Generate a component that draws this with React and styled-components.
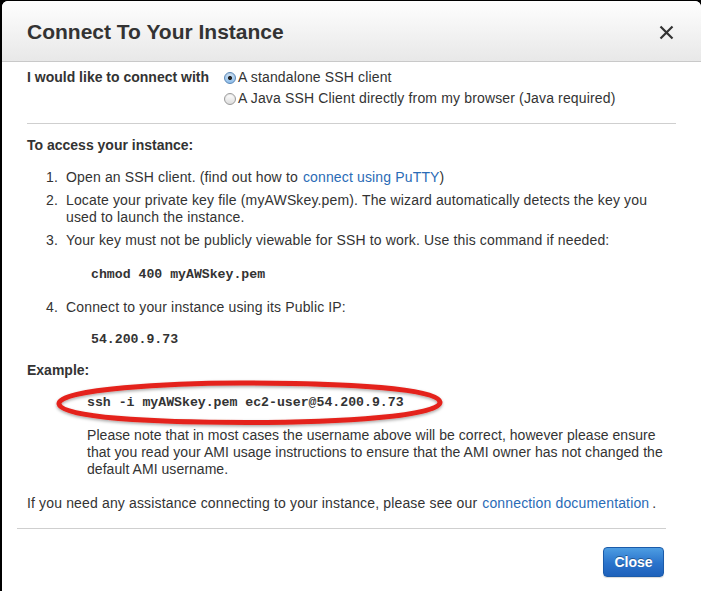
import React from "react";
import styled, { createGlobalStyle } from "styled-components";

const Global = createGlobalStyle`
  html, body { margin: 0; padding: 0; }
  body {
    background: #000;
    font-family: "Liberation Sans", Arial, Helvetica, sans-serif;
    color: #333;
    overflow: hidden;
  }
`;

const Dialog = styled.div`
  margin: 1px 0 0 2px;
  width: 699px;
  height: 590px;
  background: #fff;
  border-radius: 6px 6px 0 0;
  overflow: hidden;
  display: flex;
  flex-direction: column;
`;

const Header = styled.div`
  height: 61px;
  flex: none;
  display: flex;
  align-items: center;
  justify-content: space-between;
  padding: 2px 27px 0 25px;
  box-sizing: border-box;
  background: linear-gradient(#fefefe, #e8e8e8);
  border-bottom: 1px solid #c9c9c9;
`;

const Title = styled.h1`
  margin: 0;
  font-size: 21px;
  font-weight: bold;
  color: #333;
`;

const CloseX = styled.button`
  border: 0;
  background: none;
  padding: 0;
  width: 15px;
  height: 15px;
  display: flex;
`;

const Body = styled.div`
  padding: 0 25px 0 25px;
  font-size: 14px;
  letter-spacing: 0.15px;
  line-height: 17px;
`;

const ConnectRow = styled.div`
  display: grid;
  grid-template-columns: 197px 1fr;
  margin-top: 5px;
`;

const BoldLabel = styled.div`
  font-weight: bold;
  line-height: 21px;
  letter-spacing: 0;
`;

const RadioList = styled.div`
  display: flex;
  flex-direction: column;
`;

const RadioOption = styled.label`
  display: flex;
  align-items: center;
  line-height: 21px;
  height: 21px;
`;

const RadioDot = styled.span`
  width: 12px;
  height: 12px;
  flex: none;
  box-sizing: border-box;
  border-radius: 50%;
  margin-right: 2px;
  border: 1px solid ${(p) => (p.$on ? "#5a88b8" : "#9a9a9a")};
  background: ${(p) =>
    p.$on
      ? "radial-gradient(circle, #222 0 1.8px, transparent 2.3px), linear-gradient(#cfe4f8, #8ebde9)"
      : "linear-gradient(#ffffff, #dcdcdc)"};
  box-shadow: inset 0 1px 1px rgba(0,0,0,0.1);
`;

const Rule = styled.hr`
  border: 0;
  border-top: 1px solid #cfcfcf;
  margin: ${(p) => p.$m};
  height: 0;
`;

const Section = styled.div`
  font-weight: bold;
  letter-spacing: 0;
  margin-top: ${(p) => p.$top}px;
`;

const Steps = styled.ol`
  list-style: none;
  margin: ${(p) => p.$top}px 0 0 0;
  padding: 0;
`;

const Step = styled.li`
  display: grid;
  grid-template-columns: 39px 1fr;
  margin-bottom: ${(p) => (p.$last ? 0 : 6)}px;
`;

const Num = styled.span`
  padding-left: 19px;
`;

const Link = styled.a`
  color: #2a6bb6;
  text-decoration: none;
  margin-left: ${(p) => p.$ml || 0}px;
  margin-right: ${(p) => p.$mr || 0}px;
`;

const Code = styled.div`
  position: relative;
  font-family: "Liberation Mono", "Courier New", monospace;
  font-weight: bold;
  font-size: 13.2px;
  letter-spacing: 0;
  line-height: 17px;
  color: #333;
  margin: ${(p) => p.$top}px 0 0 ${(p) => p.$indent}px;
`;

const Ring = styled.svg`
  position: absolute;
  left: -36px;
  top: -16px;
  width: 392px;
  height: 50px;
  overflow: visible;
  pointer-events: none;
`;

const Para = styled.p`
  margin: ${(p) => p.$top}px ${(p) => p.$mr || 0}px 0 ${(p) => p.$indent || 0}px;
  letter-spacing: ${(p) => p.$ls || "inherit"};
`;

const Footer = styled.div`
  display: flex;
  justify-content: flex-end;
  padding: 18px 12px 0 0;
`;

const CloseButton = styled.button`
  width: 61px;
  height: 30px;
  border-radius: 4px;
  border: 1px solid #1b5ba9;
  background: linear-gradient(#4d9de2, #2a73cb 55%, #1e61bb);
  color: #fff;
  font-family: "Liberation Sans", Arial, sans-serif;
  font-weight: bold;
  font-size: 14px;
  text-shadow: 0 -1px 0 rgba(0,0,0,0.35);
  box-shadow: 0 1px 1px rgba(0,0,0,0.15);
  padding: 0;
`;

export default function App() {
  return (
    <>
      <Global />
      <Dialog>
        <Header>
          <Title>Connect To Your Instance</Title>
          <CloseX aria-label="close">
            <svg width="15" height="15" viewBox="0 0 15 15">
              <path d="M1.5 1.5 L13.5 13.5 M13.5 1.5 L1.5 13.5" stroke="#333" strokeWidth="2.2" />
            </svg>
          </CloseX>
        </Header>
        <Body>
          <ConnectRow>
            <BoldLabel>I would like to connect with</BoldLabel>
            <RadioList>
              <RadioOption>
                <RadioDot $on />A standalone SSH client
              </RadioOption>
              <RadioOption>
                <RadioDot />A Java SSH Client directly from my browser (Java required)
              </RadioOption>
            </RadioList>
          </ConnectRow>
          <Rule $m="14px 0 0 0" />
          <Section $top={13}>To access your instance:</Section>
          <Steps $top={15}>
            <Step>
              <Num>1.</Num>
              <span>
                Open an SSH client. (find out how to
                <Link $ml={5}>connect using PuTTY</Link>)
              </span>
            </Step>
            <Step>
              <Num>2.</Num>
              <span>
                Locate your private key file (myAWSkey.pem). The wizard automatically detects the key you
                used to launch the instance.
              </span>
            </Step>
            <Step $last>
              <Num>3.</Num>
              <span>Your key must not be publicly viewable for SSH to work. Use this command if needed:</span>
            </Step>
          </Steps>
          <Code $top={17} $indent={64}>chmod 400 myAWSkey.pem</Code>
          <Steps $top={16} start={4}>
            <Step $last>
              <Num>4.</Num>
              <span>Connect to your instance using its Public IP:</span>
            </Step>
          </Steps>
          <Code $top={15} $indent={64}>54.200.9.73</Code>
          <Section $top={14}>Example:</Section>
          <Code $top={15} $indent={60}>
            ssh -i myAWSkey.pem ec2-user@54.200.9.73
            <Ring viewBox="0 0 392 50">
              <defs>
                <filter id="sh" x="-10%" y="-40%" width="120%" height="180%">
                  <feDropShadow dx="0" dy="1.5" stdDeviation="1.5" floodColor="#000" floodOpacity="0.35" />
                </filter>
              </defs>
              <path
                d="M8 26 C 6 11, 120 4.5, 200 5 C 300 5.5, 388 11, 389 24 C 390 38, 290 44.5, 196 44.5 C 100 44.5, 10 39.5, 8 26 Z"
                fill="none"
                stroke="#e4241b"
                strokeWidth="5"
                filter="url(#sh)"
              />
            </Ring>
          </Code>
          <Para $top={16} $indent={60} $mr={-6} $ls="0.05px">
            Please note that in most cases the username above will be correct, however please ensure
            that you read your AMI usage instructions to ensure that the AMI owner has not changed the
            default AMI username.
          </Para>
          <Para $top={17}>
            If you need any assistance connecting to your instance, please see our
            <Link $ml={5} $mr={3}>connection documentation</Link>.
          </Para>
          <Rule $m="16px 10px 0 -10px" />
          <Footer>
            <CloseButton>Close</CloseButton>
          </Footer>
        </Body>
      </Dialog>
    </>
  );
}
